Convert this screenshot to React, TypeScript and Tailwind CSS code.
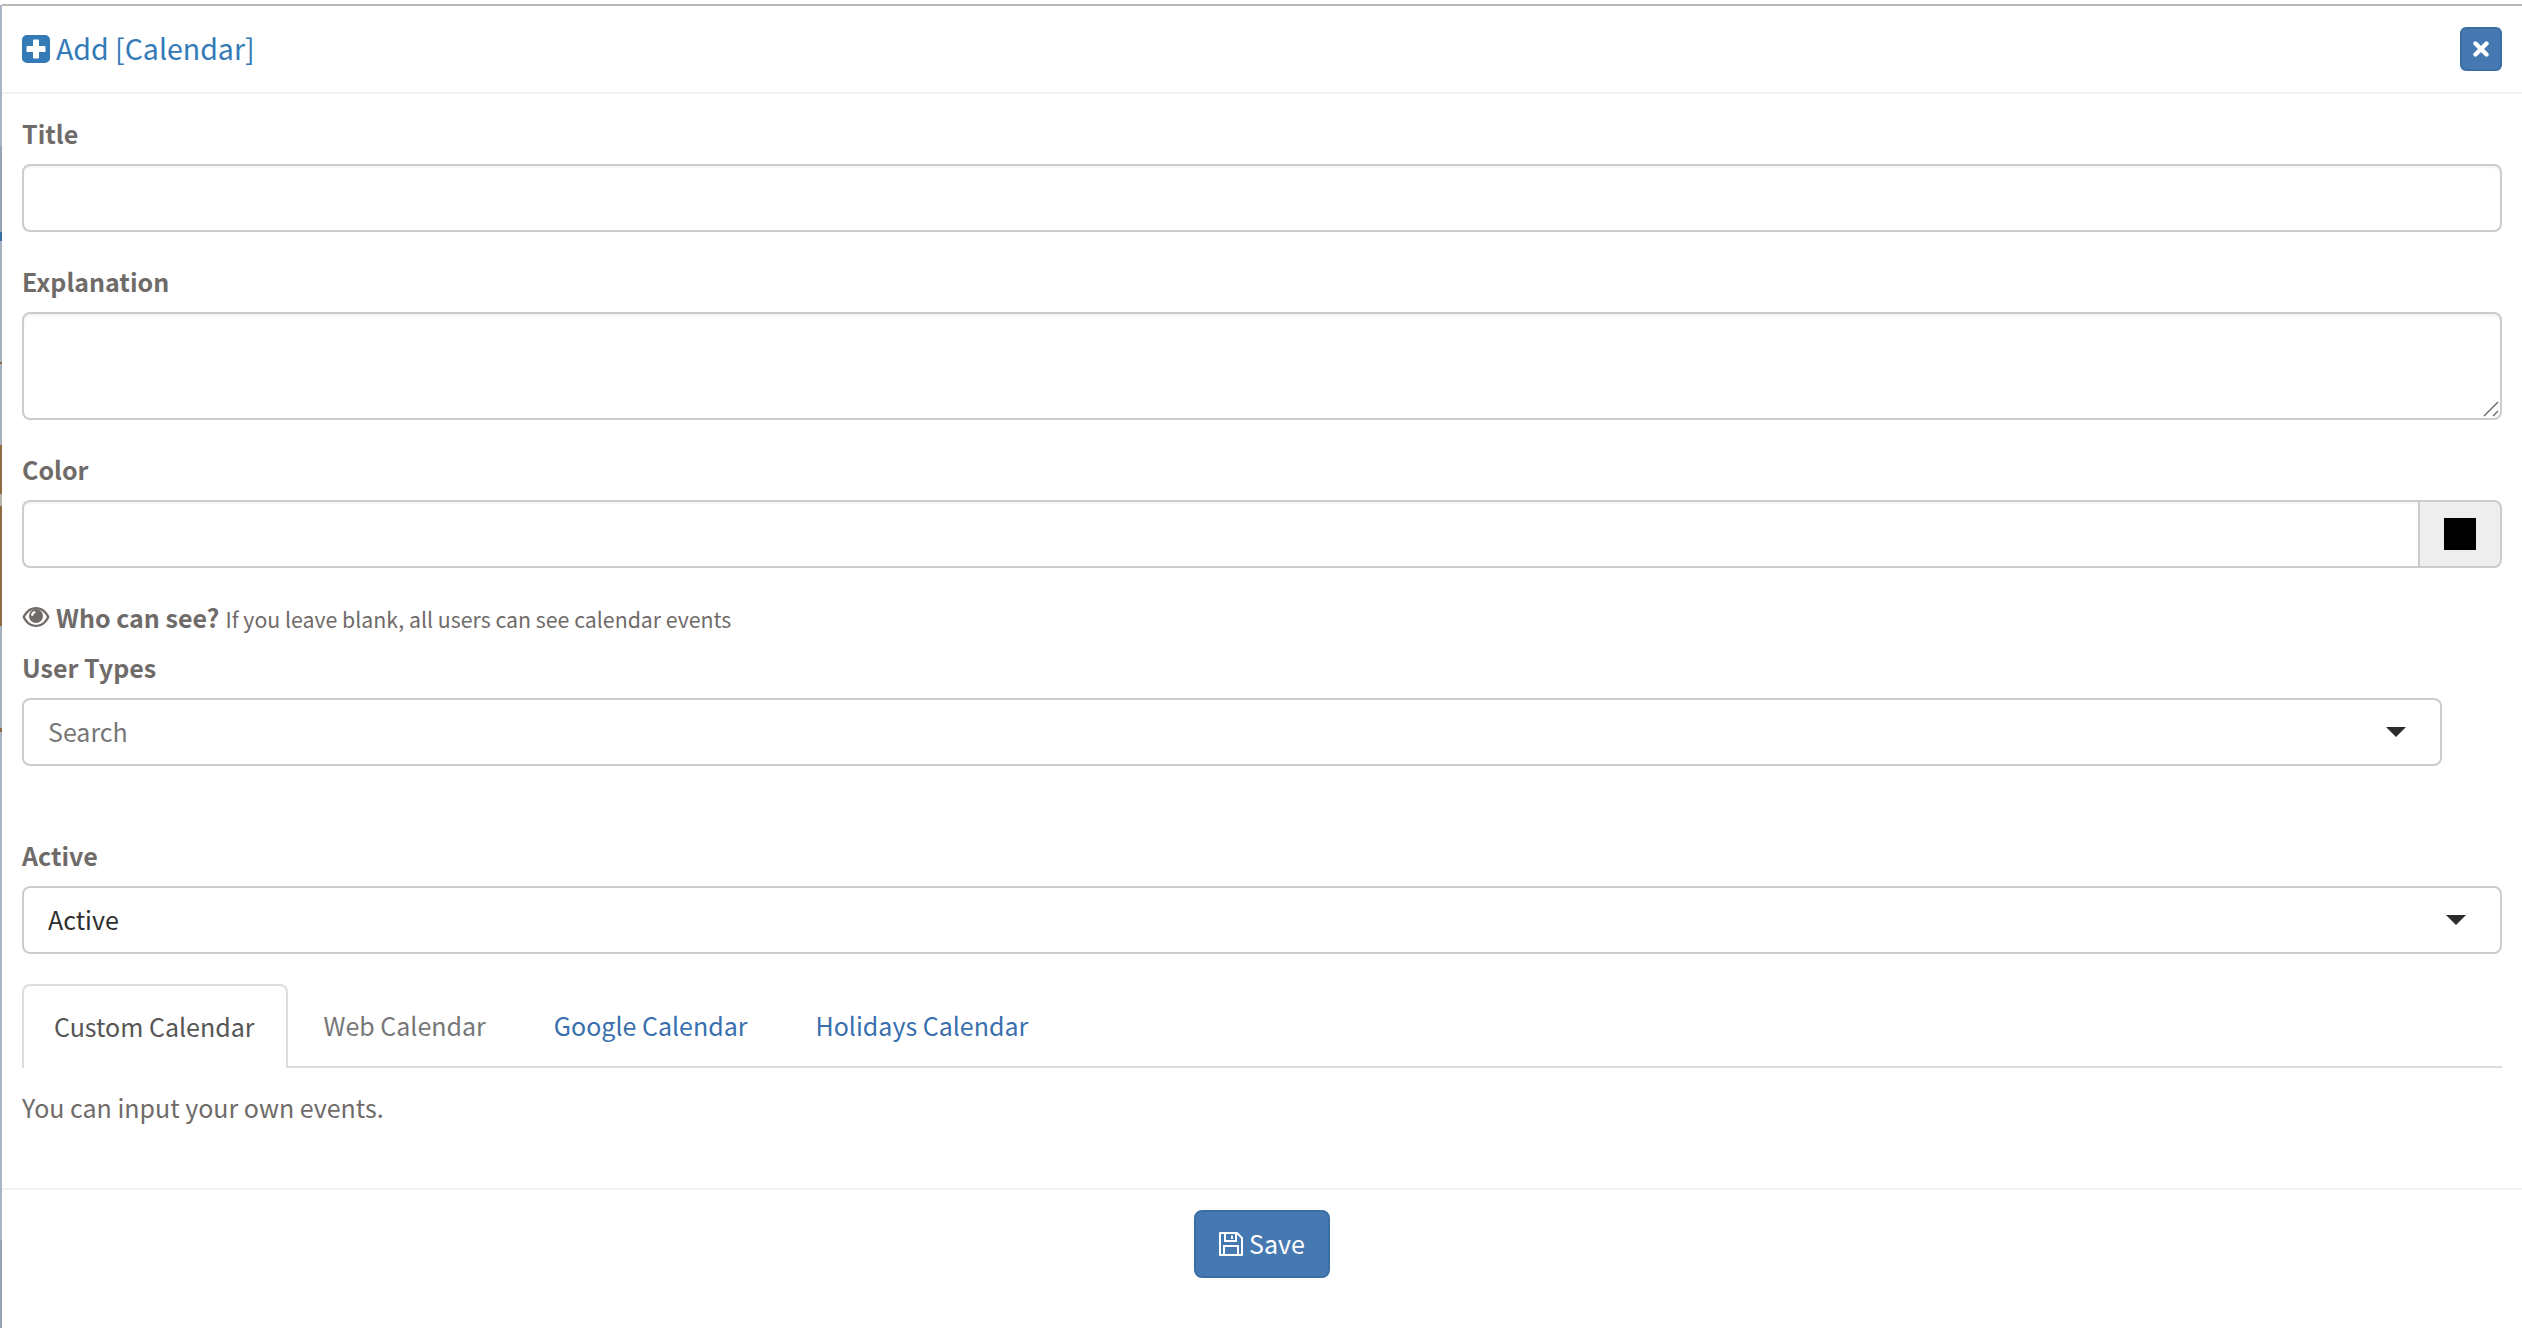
import React from "react";

function Label({ children }: { children: React.ReactNode }) {
  return <label className="block text-[25px] leading-[40px] font-bold text-[#6f6b69]">{children}</label>;
}

function Caret() {
  return (
    <svg width="20" height="10" viewBox="0 0 20 10" className="shrink-0">
      <path d="M0 0h20L10 10z" fill="#2b2b2b" />
    </svg>
  );
}

function Field({ children, className }: { children?: React.ReactNode; className: string }) {
  return (
    <div className={"flex items-center h-[68px] rounded-[8px] border-2 border-[#cccccc] bg-white pl-[24px] pr-[34px] justify-between text-[25px] " + className}>
      {children}
    </div>
  );
}

function Strip() {
  return (
    <div className="w-[2px] shrink-0 flex flex-col pt-[5px]">
      <div className="h-[141px] bg-[#aab4c4]" />
      <div className="h-[86px] bg-[#98a3b5]" />
      <div className="h-[9px] bg-[#3b6ea5]" />
      <div className="h-[121px] bg-[#a6b0bf]" />
      <div className="h-[2px] bg-[#8f6a42]" />
      <div className="h-[81px] bg-[#a6b0bf]" />
      <div className="h-[49px] bg-[#8f6a42]" />
      <div className="h-[12px] bg-[#b9b4ab]" />
      <div className="h-[120px] bg-[#8f6a42]" />
      <div className="h-[102px] bg-[#a6b0bf]" />
      <div className="h-[4px] bg-[#8f6a42]" />
      <div className="h-[508px] bg-[#aab4c4]" />
      <div className="flex-1 bg-[#98a3b5]" />
    </div>
  );
}

export default function App() {
  return (
    <div className="flex w-[2522px] h-[1328px] overflow-hidden bg-white font-['Noto_Sans_CJK_SC','Source_Sans_Pro',sans-serif] text-[#6f6b69]">
      <Strip />
      <div className="flex-1 flex flex-col min-w-0">
        <div className="mt-[4px] border-t-2 border-[#b9b9b9]" />
        <header className="h-[88px] flex items-center justify-between pl-[20px] pr-[20px] border-b-2 border-[#f2f2f2]">
          <div className="flex items-center gap-[6px] text-[#337ab7] text-[28.500px] leading-[40px]">
            <svg width="28" height="28" viewBox="0 0 28 28" className="shrink-0">
              <rect width="28" height="28" rx="5" fill="#337ab7" />
              <path d="M12 4.500h4a1 1 0 0 1 1 1V11h5.500a1 1 0 0 1 1 1v4a1 1 0 0 1-1 1H17v5.500a1 1 0 0 1-1 1h-4a1 1 0 0 1-1-1V17H5.500a1 1 0 0 1-1-1v-4a1 1 0 0 1 1-1H11V5.500a1 1 0 0 1 1-1z" fill="#fff" />
            </svg>
            <span className="-translate-y-[1px]">Add [Calendar]</span>
          </div>
          <button className="w-[42px] h-[44px] rounded-[6px] border-2 border-[#3a6ea5] bg-[#4679b2] flex items-center justify-center">
            <svg width="16" height="16" viewBox="0 0 16 16">
              <path d="M2.500 2.500l11 11M13.500 2.500l-11 11" stroke="#fff" strokeWidth="4.400" strokeLinecap="round" />
            </svg>
          </button>
        </header>

        <div className="flex flex-col pl-[20px] pr-[20px]">
          <div className="mt-[19px]"><Label>Title</Label></div>
          <input className="mt-[11px] h-[68px] rounded-[8px] border-2 border-[#cccccc] shadow-[inset_0_2px_2px_rgba(0,0,0,0.05)] outline-none" />

          <div className="mt-[29px]"><Label>Explanation</Label></div>
          <div className="relative mt-[11px] h-[108px]">
            <textarea className="block w-full h-full rounded-[8px] border-2 border-[#cccccc] shadow-[inset_0_2px_2px_rgba(0,0,0,0.05)] outline-none resize-none" />
            <svg width="16" height="16" viewBox="0 0 16 16" className="absolute right-[3px] bottom-[3px]">
              <path d="M1 15L15 1M10 15l5-5" stroke="#666666" strokeWidth="1.400" fill="none" />
            </svg>
          </div>

          <div className="mt-[29px]"><Label>Color</Label></div>
          <div className="mt-[11px] flex h-[68px]">
            <input className="flex-1 min-w-0 rounded-l-[8px] border-2 border-r-0 border-[#cccccc] shadow-[inset_0_2px_2px_rgba(0,0,0,0.05)] outline-none" />
            <div className="w-[84px] rounded-r-[8px] border-2 border-[#cccccc] bg-[#eeeeee] flex items-center justify-center">
              <div className="w-[32px] h-[32px] bg-black" />
            </div>
          </div>

          <div className="mt-[29px] flex items-baseline h-[40px] leading-[40px]">
            <svg width="28" height="22" viewBox="0 0 28 22" className="self-center shrink-0">
              <path d="M14 1C8 1 3 5 .5 11 3 17 8 21 14 21s11-4 13.500-10C25 5 20 1 14 1z" fill="#6f6b69" />
              <path d="M14 3.200C9.500 3.200 5.500 6 3.100 11c2.400 5 6.400 7.800 10.900 7.800S22.500 16 24.900 11C22.500 6 18.500 3.200 14 3.200z" fill="#fff" />
              <circle cx="14" cy="10" r="7" fill="#6f6b69" />
              <path d="M9 9.500a5 5 0 0 1 4-4.500l.5 2A3 3 0 0 0 11 10z" fill="#fff" />
            </svg>
            <b className="ml-[6px] text-[25px] font-bold">Who can see?</b>
            <span className="ml-[6px] text-[21.300px]">If you leave blank, all users can see calendar events</span>
          </div>

          <div className="mt-[10px]"><Label>User Types</Label></div>
          <div className="mt-[11px] pr-[60px]">
            <Field className="text-[#777777]"><span>Search</span><Caret /></Field>
          </div>

          <div className="mt-[69px]"><Label>Active</Label></div>
          <div className="mt-[11px]">
            <Field className="text-[#2f2f2f]"><span>Active</span><Caret /></Field>
          </div>

          <nav className="mt-[30px] flex border-b-2 border-[#dddddd] text-[25px] h-[84px]">
            <div className="h-[84px] pl-[30px] pr-[32px] pb-[1px] flex items-center rounded-t-[8px] border-2 border-b-0 border-[#dddddd] bg-white text-[#555555]">Custom Calendar</div>
            <div className="ml-[3px] px-[32px] pt-[1px] flex items-center text-[#777777]">Web Calendar</div>
            <div className="ml-[4px] px-[32px] pt-[1px] flex items-center text-[#3a6fae]">Google Calendar</div>
            <div className="ml-[4px] px-[32px] pt-[1px] flex items-center text-[#3a6fae]">Holidays Calendar</div>
          </nav>

          <p className="mt-[19px] text-[25px] leading-[40px]">You can input your own events.</p>
        </div>

        <footer className="mt-[61px] border-t-2 border-[#f2f2f2] flex justify-center pt-[20px]">
          <button className="w-[136px] h-[68px] rounded-[8px] border-2 border-[#3a6ea5] bg-[#4679b2] text-white text-[25px] flex items-center justify-center gap-[6px]">
            <svg width="24" height="24" viewBox="0 0 24 24" fill="none" stroke="#fff" strokeWidth="2">
              <path d="M1 1h17l5 5v17H1z" strokeLinejoin="round" />
              <path d="M6 1v8h11V1M13 3.500v3.500" />
              <path d="M5 23v-9h14v9" />
            </svg>
            <span>Save</span>
          </button>
        </footer>
      </div>
    </div>
  );
}
